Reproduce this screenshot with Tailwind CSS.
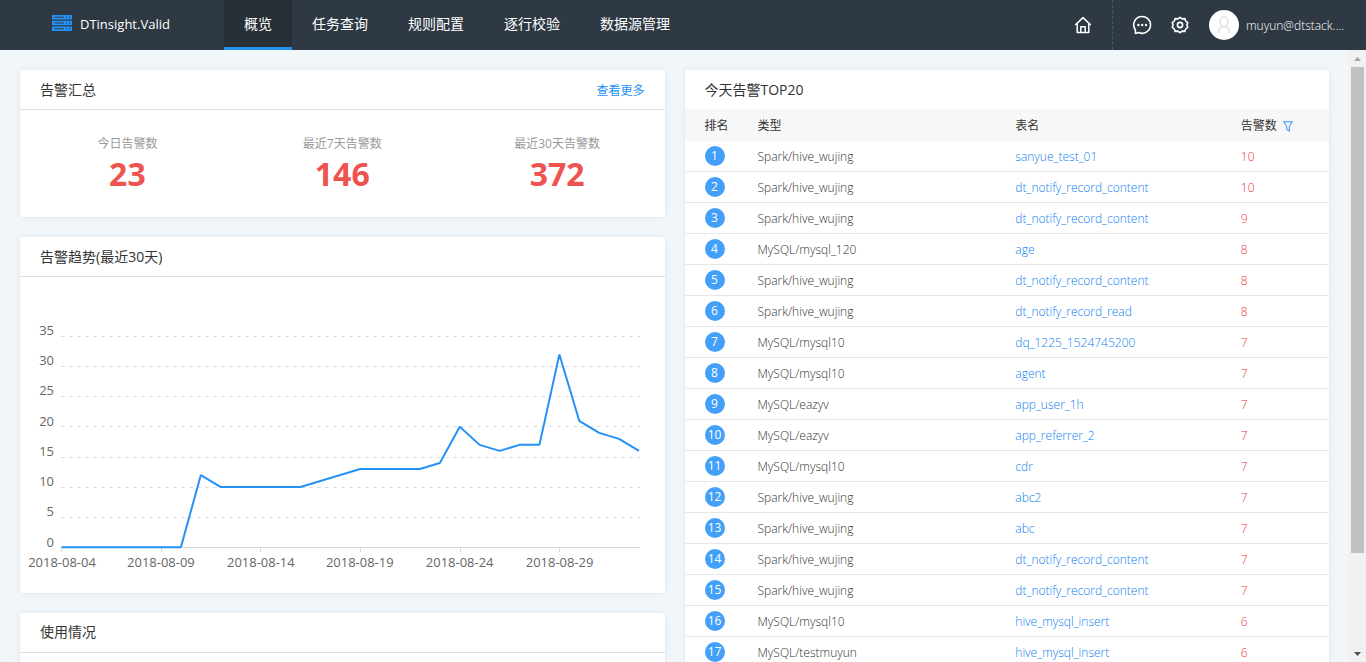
<!DOCTYPE html>
<html lang="zh-CN">
<head>
<meta charset="utf-8">
<title>DTinsight.Valid</title>
<meta name="viewport" content="width=device-width, initial-scale=1">
<script src="https://cdn.jsdelivr.net/npm/@tailwindcss/browser@4"></script>
</head>
<body class="flex h-screen flex-col overflow-hidden bg-[#f0f6f9] font-['Open_Sans','Noto_Sans_CJK_SC',sans-serif] text-xs text-[#333]">

<header class="flex h-[50px] shrink-0 items-stretch bg-[#2f3943] text-white">
  <a href="#" class="flex w-56 shrink-0 items-center gap-2 pl-[52px] text-[13px]">
    <svg class="-mt-1 shrink-0" width="20" height="16" viewBox="0 0 20 16" aria-hidden="true">
      <g fill="#2491f7"><rect width="20" height="4.4" rx=".6"/><rect y="5.8" width="20" height="4.4" rx=".6"/><rect y="11.6" width="20" height="4.4" rx=".6"/></g>
      <g fill="#2f3943"><rect x="2.5" y="1.7" width="9.5" height="1"/><rect x="2.5" y="7.5" width="9.5" height="1"/><rect x="2.5" y="13.3" width="9.5" height="1"/>
      <circle cx="14.5" cy="2.2" r=".6"/><circle cx="14.5" cy="8" r=".6"/><circle cx="14.5" cy="13.8" r=".6"/><circle cx="17.6" cy="2.2" r=".8"/><circle cx="17.6" cy="8" r=".8"/><circle cx="17.6" cy="13.8" r=".8"/></g>
    </svg>
    <span>DTinsight.Valid</span>
  </a>
  <nav class="flex text-sm leading-[47px]">
    <a href="#" aria-current="page" class="border-b-3 border-[#2491f7] bg-[#272f37] px-5">概览</a>
    <a href="#" class="px-5">任务查询</a>
    <a href="#" class="px-5">规则配置</a>
    <a href="#" class="px-5">逐行校验</a>
    <a href="#" class="px-5">数据源管理</a>
  </nav>
  <div class="ml-auto flex items-center">
    <button type="button" aria-label="首页" class="flex h-full items-center border-r border-dashed border-[#4b5763] pr-5">
      <svg width="18" height="18" viewBox="0 0 18 18" fill="none" stroke="#fff" stroke-width="1.5" stroke-linejoin="round"><path d="M1.2 9 9 1.6 16.8 9"/><path d="M3.2 7.500v9h11.600v-9"/><path d="M6.800 16.500v-5.700h4.400v5.700"/></svg>
    </button>
    <button type="button" aria-label="消息" class="ml-[19px]">
      <svg width="20" height="20" viewBox="0 0 20 20" fill="none" stroke="#fff" stroke-width="1.6" stroke-linejoin="round"><path d="M3.400 18.400V14.900A8.400 8.400 0 1 1 6.600 17.500Z"/><g fill="#fff" stroke="none"><circle cx="6.400" cy="10" r="1.200"/><circle cx="10.200" cy="10" r="1.200"/><circle cx="14" cy="10" r="1.200"/></g></svg>
    </button>
    <button type="button" aria-label="设置" class="ml-[19px]">
      <svg width="18" height="18" viewBox="0 0 18 18" fill="none" stroke="#fff" stroke-width="1.6" stroke-linejoin="round"><path d="M9 1.300 11.100 2.900 13.800 2.600 14.700 5 16.700 6.700 15.900 9 16.700 11.300 14.700 13 13.800 15.400 11.100 15.100 9 16.700 6.900 15.100 4.200 15.400 3.300 13 1.300 11.300 2.100 9 1.300 6.700 3.300 5 4.200 2.600 6.900 2.900Z"/><circle cx="9" cy="9" r="2.600"/></svg>
    </button>
    <button type="button" class="ml-5 flex w-[157px] items-center gap-[7px]">
      <span class="flex size-[30px] shrink-0 items-center justify-center rounded-full bg-white">
        <svg width="14" height="18" viewBox="0 0 14 18" fill="none" stroke="#e6e6e6" stroke-width="1.800" aria-hidden="true"><ellipse cx="7" cy="5.700" rx="4" ry="4.600"/><path d="M1.400 17c0-4.500 2.200-6.600 5.600-6.600s5.600 2.100 5.600 6.600"/></svg>
      </span>
      <span class="pt-0.5 font-light">muyun@dtstack....</span>
    </button>
  </div>
</header>

<div class="flex min-h-0 flex-1">
  <main class="grid min-w-0 flex-1 grid-cols-2 content-start items-start gap-5 overflow-hidden p-5">
    <div class="flex flex-col gap-5">
      <section class="rounded-xs bg-white shadow-[0_0_6px_rgba(0,0,0,0.08)]">
        <div class="flex h-10 items-center justify-between border-b border-[#ddd] px-5">
          <h2 class="text-sm">告警汇总</h2>
          <a href="#" class="pt-0.5 text-[#2491f7]">查看更多</a>
        </div>
        <dl class="grid h-[107px] grid-cols-3 pt-6 text-center">
          <div><dt class="leading-5 text-[#999]">今日告警数</dt><dd class="text-[32px] leading-10 font-bold text-[#ef5350]">23</dd></div>
          <div><dt class="leading-5 text-[#999]">最近7天告警数</dt><dd class="text-[32px] leading-10 font-bold text-[#ef5350]">146</dd></div>
          <div><dt class="leading-5 text-[#999]">最近30天告警数</dt><dd class="text-[32px] leading-10 font-bold text-[#ef5350]">372</dd></div>
        </dl>
      </section>

      <section class="rounded-xs bg-white shadow-[0_0_6px_rgba(0,0,0,0.08)]">
        <div class="flex h-10 items-center border-b border-[#ddd] px-5"><h2 class="text-sm">告警趋势(最近30天)</h2></div>
        <svg class="block h-auto w-full" viewBox="0 0 645 316" role="img" aria-label="告警趋势">
          <g stroke="#ddd" stroke-dasharray="4 4" shape-rendering="crispEdges">
            <path d="M41 59.500H620M41 89.500H620M41 119.500H620M41 149.500H620M41 180.500H620M41 210.500H620M41 240.500H620"/>
          </g>
          <path d="M41 270.500H620M41.500 270v5M141.500 270v5M240.500 270v5M340.500 270v5M440.500 270v5M539.500 270v5" stroke="#d8d8d8" shape-rendering="crispEdges"/>
          <polyline fill="none" stroke="#2491f7" stroke-width="2" stroke-linejoin="bevel" points="41.500,270.5 161,270.5 181,198.2 201,210.2 280.700,210.2 300.600,204.2 320.500,198.2 340.500,192.1 400.200,192.1 420.200,186.1 440.100,149.9 460,168 480,174 499.900,168 519.800,168 539.800,77.6 559.700,143.9 579.600,156 599.500,162 619.500,174"/>
          <g fill="#666" font-size="13" text-anchor="end">
            <text x="34" y="58">35</text><text x="34" y="88">30</text><text x="34" y="118">25</text><text x="34" y="149">20</text><text x="34" y="179">15</text><text x="34" y="209">10</text><text x="34" y="239">5</text><text x="34" y="270">0</text>
          </g>
          <g fill="#666" font-size="13" text-anchor="middle">
            <text x="42" y="290">2018-08-04</text><text x="141" y="290">2018-08-09</text><text x="241" y="290">2018-08-14</text><text x="340" y="290">2018-08-19</text><text x="440" y="290">2018-08-24</text><text x="540" y="290">2018-08-29</text>
          </g>
        </svg>
      </section>

      <section class="min-h-40 rounded-xs bg-white shadow-[0_0_6px_rgba(0,0,0,0.08)]">
        <div class="flex h-10 items-center border-b border-[#ddd] px-5"><h2 class="text-sm">使用情况</h2></div>
      </section>
    </div>

    <section class="rounded-xs bg-white shadow-[0_0_6px_rgba(0,0,0,0.08)]">
      <h2 class="px-5 text-sm leading-[39px]">今天告警TOP20</h2>
      <table class="w-full table-fixed border-separate border-spacing-0 text-left">
        <colgroup><col class="w-[73px]"><col class="w-[40%]"><col class="w-[35%]"><col></colgroup>
        <thead class="bg-[#f7f7f7]">
          <tr class="h-8">
            <th class="p-0 pt-0.5 pl-5 font-normal">排名</th><th class="p-0 pt-0.5 font-normal">类型</th><th class="p-0 pt-0.5 font-normal">表名</th>
            <th class="p-0 pt-0.5 font-normal"><span class="flex items-center gap-1.5">告警数
              <button type="button" aria-label="筛选"><svg class="block" width="10" height="11" viewBox="0 0 10 11" fill="none" stroke="#2491f7" stroke-linejoin="round"><path d="M.5.800h9L6.300 5.200v5L3.700 8.600V5.200Z"/></svg></button></span></th>
          </tr>
        </thead>
        <tbody id="rows"></tbody>
      </table>
    </section>
  </main>

  <div class="flex w-[17px] shrink-0 flex-col items-center justify-between bg-[#f1f1f1]" aria-hidden="true">
    <div class="flex h-[17px] items-center"><svg width="7" height="4" viewBox="0 0 7 4"><path d="M0 4h7L3.500 0Z" fill="#a3a3a3"/></svg></div>
    <div class="flex w-[13px] flex-1 flex-col"><div class="h-[84%] bg-[#c1c1c1]"></div></div>
    <div class="flex h-[17px] items-center"><svg width="7" height="4" viewBox="0 0 7 4"><path d="M0 0h7L3.500 4Z" fill="#505050"/></svg></div>
  </div>
</div>

<script>
const rows = [
  ['Spark/hive_wujing', 'sanyue_test_01', 10],
  ['Spark/hive_wujing', 'dt_notify_record_content', 10],
  ['Spark/hive_wujing', 'dt_notify_record_content', 9],
  ['MySQL/mysql_120', 'age', 8],
  ['Spark/hive_wujing', 'dt_notify_record_content', 8],
  ['Spark/hive_wujing', 'dt_notify_record_read', 8],
  ['MySQL/mysql10', 'dq_1225_1524745200', 7],
  ['MySQL/mysql10', 'agent', 7],
  ['MySQL/eazyv', 'app_user_1h', 7],
  ['MySQL/eazyv', 'app_referrer_2', 7],
  ['MySQL/mysql10', 'cdr', 7],
  ['Spark/hive_wujing', 'abc2', 7],
  ['Spark/hive_wujing', 'abc', 7],
  ['Spark/hive_wujing', 'dt_notify_record_content', 7],
  ['Spark/hive_wujing', 'dt_notify_record_content', 7],
  ['MySQL/mysql10', 'hive_mysql_insert', 6],
  ['MySQL/testmuyun', 'hive_mysql_insert', 6],
];
document.getElementById('rows').innerHTML = rows.map(([type, table, count], i) => `
  <tr class="h-[31px] font-light">
    <td class="border-b border-[#e6e6e6] p-0 pl-5"><span class="flex size-5 items-center justify-center rounded-full bg-[#43a0f9] font-normal text-white">${i + 1}</span></td>
    <td class="border-b border-[#e6e6e6] p-0 pt-0.5 text-[#333]">${type}</td>
    <td class="border-b border-[#e6e6e6] p-0 pt-0.5"><a href="#" class="text-[#0f7ff0]">${table}</a></td>
    <td class="border-b border-[#e6e6e6] p-0 pt-0.5 text-[#e93a37]">${count}</td>
  </tr>`).join('');
</script>
</body>
</html>
